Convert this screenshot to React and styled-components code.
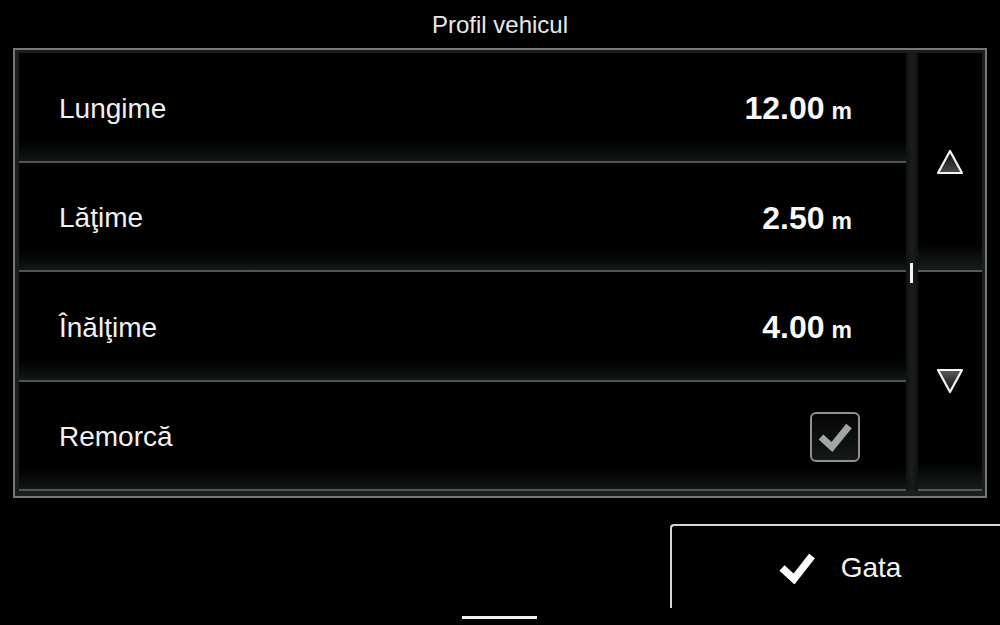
import styled, { createGlobalStyle } from "styled-components";

const GlobalStyle = createGlobalStyle`
  html, body {
    margin: 0;
    padding: 0;
    background: #000;
  }
  body {
    font-family: "Liberation Sans", Arial, sans-serif;
    color: #f2f2f2;
  }
`;

const rows = [
  { label: "Lungime", value: "12.00", unit: "m" },
  { label: "Lăţime", value: "2.50", unit: "m" },
  { label: "Înălţime", value: "4.00", unit: "m" },
  { label: "Remorcă", checked: true },
];

const ArrowIcon = ({ down }) => (
  <svg width="28" height="26" viewBox="0 0 28 26">
    <defs>
      <linearGradient id={down ? "gd" : "gu"} x1="0" y1="0" x2="0" y2="1">
        <stop offset="0%" stopColor={down ? "#5a5a5a" : "#0c0c0c"} />
        <stop offset="100%" stopColor={down ? "#0c0c0c" : "#4a4a4a"} />
      </linearGradient>
    </defs>
    <polygon
      points={down ? "2,2 26,2 14,24" : "14,2 26,24 2,24"}
      fill={`url(#${down ? "gd" : "gu"})`}
      stroke="#f4f4f4"
      strokeWidth="2.2"
      strokeLinejoin="round"
    />
  </svg>
);

const App = () => {
  return (
    <>
      <GlobalStyle />
      <Screen>
        <Title>Profil vehicul</Title>
        <Panel>
          <List>
            {rows.map((row) => (
              <Row key={row.label}>
                <Label>{row.label}</Label>
                {row.checked !== undefined ? (
                  <CheckBox>
                    <svg width="36" height="32" viewBox="0 0 36 32">
                      <polyline
                        points="4,16 15,26 32,5"
                        fill="none"
                        stroke="#a2a7a4"
                        strokeWidth="7"
                      />
                    </svg>
                  </CheckBox>
                ) : (
                  <Value>
                    {row.value}
                    <Unit>{row.unit}</Unit>
                  </Value>
                )}
              </Row>
            ))}
          </List>
          <Track>
            <Thumb />
          </Track>
          <Arrows>
            <ArrowCell>
              <ArrowIcon />
            </ArrowCell>
            <ArrowCell>
              <ArrowIcon down />
            </ArrowCell>
          </Arrows>
        </Panel>
        <Footer>
          <Handle />
          <DoneButton>
            <svg width="36" height="32" viewBox="0 0 36 32">
              <polyline
                points="3,16 15,27 33,4"
                fill="none"
                stroke="#ffffff"
                strokeWidth="7.5"
              />
            </svg>
            <DoneText>Gata</DoneText>
          </DoneButton>
        </Footer>
      </Screen>
    </>
  );
};

const Screen = styled.div`
  width: 1000px;
  height: 625px;
  display: flex;
  flex-direction: column;
  overflow: hidden;
`;

const Title = styled.div`
  height: 48px;
  display: flex;
  align-items: center;
  justify-content: center;
  padding-top: 1px;
  box-sizing: border-box;
  font-size: 24px;
  color: #e8e8e8;
`;

const Panel = styled.div`
  margin: 0 13px;
  height: 450px;
  box-sizing: border-box;
  border: 2px solid #757877;
  background: #1b1e1d;
  padding: 3px 3px 5px 4px;
  display: flex;
`;

const List = styled.div`
  width: 887px;
  display: flex;
  flex-direction: column;
`;

const Row = styled.div`
  flex: 1;
  display: flex;
  align-items: center;
  justify-content: space-between;
  padding: 4px 54px 0 40px;
  background: linear-gradient(
    to bottom,
    #000 0%,
    #000 80%,
    #070a08 90%,
    #131916 100%
  );
  border-bottom: 2px solid #4f5453;
`;

const Label = styled.div`
  font-size: 28px;
  color: #f0f0f0;
`;

const Value = styled.div`
  display: flex;
  align-items: baseline;
  font-size: 32px;
  font-weight: bold;
  color: #fafafa;
`;

const Unit = styled.span`
  font-size: 23px;
  margin-left: 7px;
`;

const CheckBox = styled.div`
  width: 50px;
  height: 50px;
  box-sizing: border-box;
  margin-right: -8px;
  border: 2px solid #8d918f;
  border-radius: 6px;
  background: linear-gradient(to bottom, #050505, #151817);
  display: flex;
  align-items: center;
  justify-content: center;
`;

const Track = styled.div`
  position: relative;
  width: 12px;
  background: linear-gradient(to right, #0e1210, #191e1c 50%, #0e1210);
`;

const Thumb = styled.div`
  position: absolute;
  left: 4px;
  top: 210px;
  width: 3px;
  height: 20px;
  background: #f4f4f4;
`;

const Arrows = styled.div`
  width: 64px;
  display: flex;
  flex-direction: column;
`;

const ArrowCell = styled.div`
  flex: 1;
  display: flex;
  align-items: center;
  justify-content: center;
  background: linear-gradient(
    to bottom,
    #000 0%,
    #000 88%,
    #0c100e 94%,
    #171c1a 100%
  );
  border-bottom: 2px solid #555a58;
`;

const Footer = styled.div`
  flex: 1;
  display: flex;
  align-items: flex-start;
  padding-top: 26px;
`;

const Handle = styled.div`
  align-self: flex-end;
  margin: 0 0 6px 462px;
  width: 75px;
  height: 3px;
  background: #f2f2f2;
`;

const DoneButton = styled.div`
  margin-left: auto;
  width: 330px;
  height: 84px;
  box-sizing: border-box;
  border-top: 2px solid #d6d6d6;
  border-left: 2px solid #d6d6d6;
  border-top-left-radius: 4px;
  display: flex;
  align-items: center;
  justify-content: center;
  gap: 26px;
  padding: 2px 0 0 8px;
`;

const DoneText = styled.span`
  font-size: 28px;
  color: #f4f4f4;
`;

export default App;
